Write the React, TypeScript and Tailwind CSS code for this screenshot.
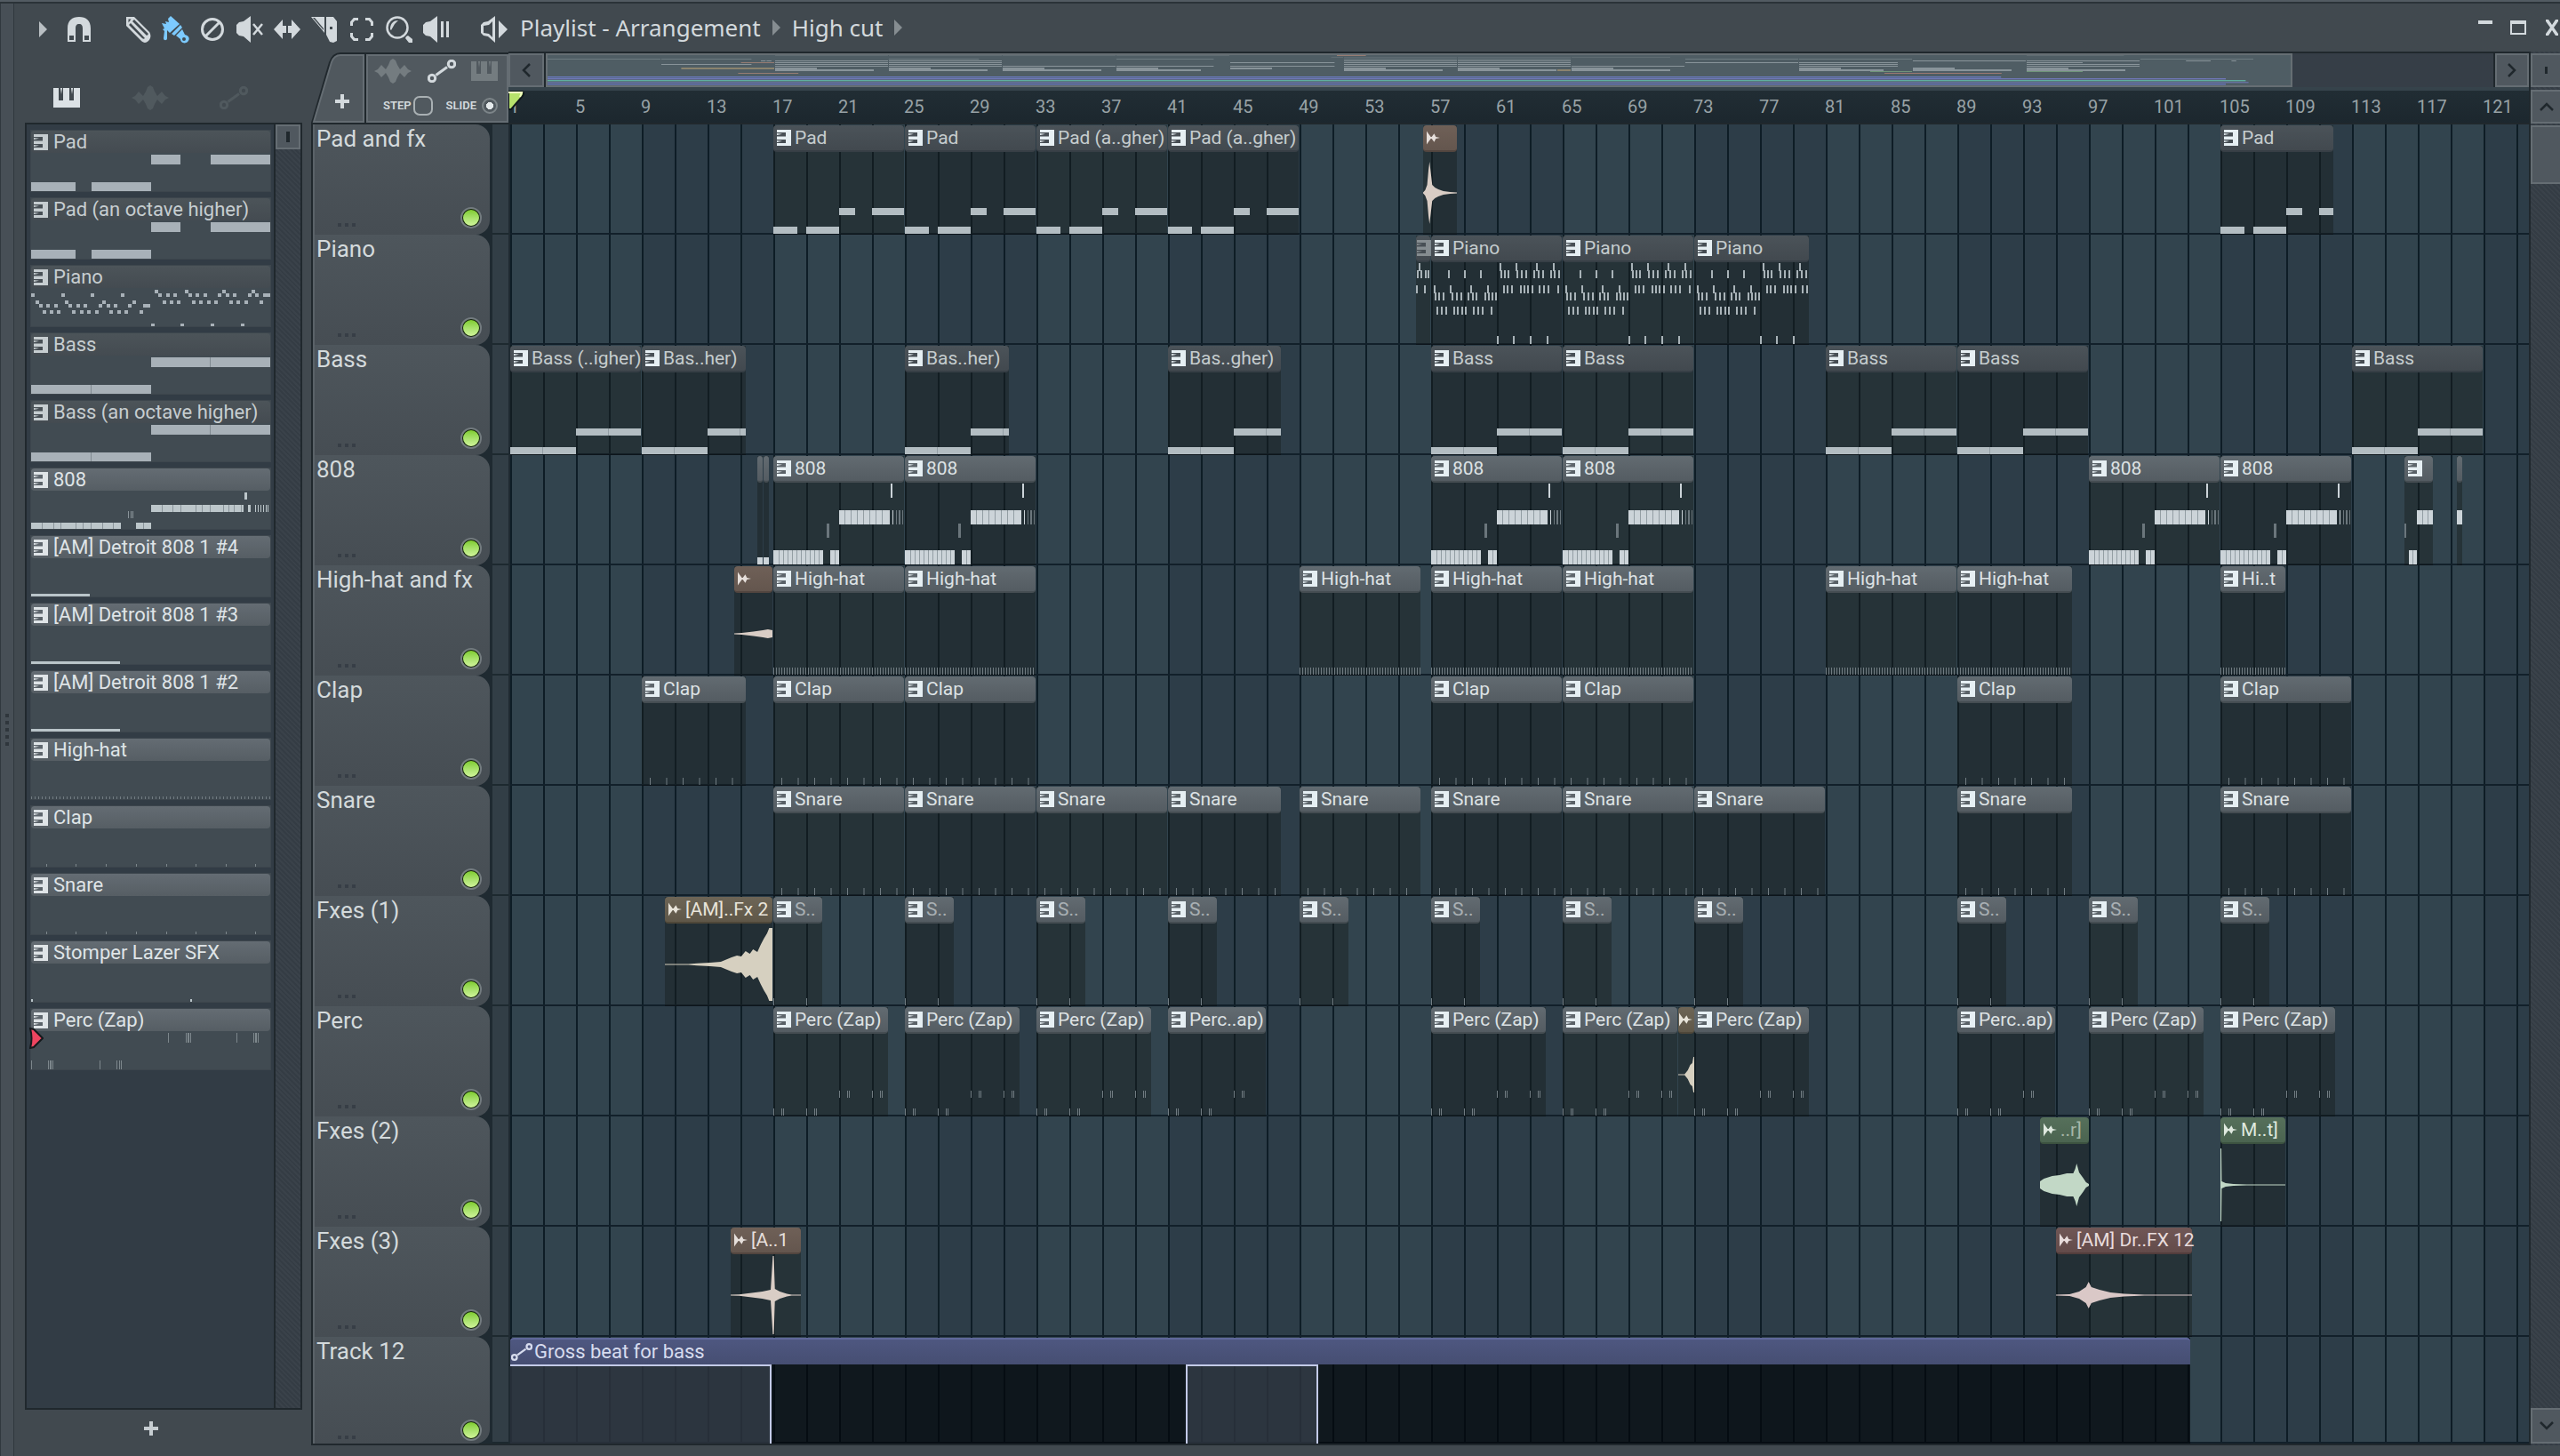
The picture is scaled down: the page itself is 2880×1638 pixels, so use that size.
import type { CSSProperties, ReactNode } from "react";

const BAR = 18.5; // px per bar on the grid
const MINI = 16; // px per bar in the overview

type Kind = "dark" | "light" | "brown" | "olive" | "red" | "green";
type Clip = { at: number; len: number; name?: string; kind: Kind; draw?: string; dim?: boolean };
type Track = { name: string; clips: Clip[] };

const HEAD: Record<Kind, string> = {
  dark: "from-[#4b5359] to-[#42494f] border-[#373f46] text-[#c5ccce]",
  light: "from-[#626b71] to-[#545c62] border-[#454d52] text-[#dde2e4]",
  brown: "from-[#6f6057] to-[#64564e] border-[#52453f] text-[#e6dfdb]",
  olive: "from-[#6d6556] to-[#5f5748] border-[#4f4739] text-[#e8e4da]",
  red: "from-[#705756] to-[#634b4a] border-[#523d3c] text-[#e8dcdc]",
  green: "from-[#56705b] to-[#4b6450] border-[#3c5240] text-[#dfe9df]",
};

const MINI_FILL: Record<Kind, string> = {
  dark: "#6d7a80",
  light: "#89949a",
  brown: "#967c73",
  olive: "#8b836e",
  red: "#9a7771",
  green: "#6f9479",
};

const WAVE_FILL: Record<Kind, string> = {
  dark: "#fff",
  light: "#fff",
  brown: "#d9cdc5",
  olive: "#d6d0c0",
  red: "#dac8c7",
  green: "#c2d8c6",
};

function many(starts: number[], len: number, name: string, kind: Kind, draw: string, dim = false): Clip[] {
  return starts.map((at) => ({ at, len, name, kind, draw, dim }));
}

const TRACKS: Track[] = [
  {
    name: "Pad and fx",
    clips: [
      ...many([17, 25], 8, "Pad", "dark", "pad"),
      ...many([33, 41], 8, "Pad (a..gher)", "dark", "pad"),
      { at: 56.5, len: 2.1, kind: "brown", draw: "hit" },
      { at: 105, len: 6.9, name: "Pad", kind: "dark", draw: "pad" },
    ],
  },
  {
    name: "Piano",
    clips: [
      { at: 56.1, len: 0.9, kind: "dark", draw: "pianoIn", name: "", dim: true },
      ...many([57, 65], 8, "Piano", "dark", "piano"),
      { at: 73, len: 7, name: "Piano", kind: "dark", draw: "piano" },
    ],
  },
  {
    name: "Bass",
    clips: [
      { at: 1, len: 8, name: "Bass (..igher)", kind: "dark", draw: "bass" },
      ...many([9, 25], 6.4, "Bas..her)", "dark", "bass"),
      { at: 41, len: 6.9, name: "Bas..gher)", kind: "dark", draw: "bass" },
      ...many([57, 65, 81, 89, 113], 8, "Bass", "dark", "bass"),
    ],
  },
  {
    name: "808",
    clips: [
      ...many([16, 16.4], 0.4, "", "light", "stub"),
      ...many([17, 25, 57, 65, 97, 105], 8, "808", "light", "808"),
      { at: 116.2, len: 1.8, name: "", kind: "light", draw: "808end" },
      { at: 119.4, len: 0.4, name: "", kind: "light", draw: "808tail" },
    ],
  },
  {
    name: "High-hat and fx",
    clips: [
      { at: 14.6, len: 2.4, kind: "brown", draw: "rise" },
      ...many([17, 25, 57, 65, 81], 8, "High-hat", "light", "hat"),
      { at: 49, len: 7.4, name: "High-hat", kind: "light", draw: "hat" },
      { at: 89, len: 7, name: "High-hat", kind: "light", draw: "hat" },
      { at: 105, len: 4, name: "Hi..t", kind: "light", draw: "hat" },
    ],
  },
  {
    name: "Clap",
    clips: [
      { at: 9, len: 6.4, name: "Clap", kind: "light", draw: "beat" },
      ...many([17, 25, 57, 65, 105], 8, "Clap", "light", "beat"),
      { at: 89, len: 7, name: "Clap", kind: "light", draw: "beat" },
    ],
  },
  {
    name: "Snare",
    clips: [
      ...many([17, 25, 33, 57, 65, 73, 105], 8, "Snare", "light", "beat"),
      { at: 41, len: 6.9, name: "Snare", kind: "light", draw: "beat" },
      { at: 49, len: 7.4, name: "Snare", kind: "light", draw: "beat" },
      { at: 89, len: 7, name: "Snare", kind: "light", draw: "beat" },
    ],
  },
  {
    name: "Fxes (1)",
    clips: [
      { at: 10.4, len: 6.6, name: "[AM]..Fx 2", kind: "olive", draw: "swell" },
      ...many([17, 25, 33, 41, 49, 57, 65, 73, 89, 97, 105], 3, "S..", "light", "laser", true),
    ],
  },
  {
    name: "Perc",
    clips: [
      ...many([17, 25, 33, 57, 65, 73, 97, 105], 7, "Perc (Zap)", "light", "perc"),
      ...many([41, 89], 6, "Perc..ap)", "light", "perc"),
      { at: 72, len: 1, kind: "olive", draw: "blip" },
    ],
  },
  {
    name: "Fxes (2)",
    clips: [
      { at: 94, len: 3, name: "..r]", kind: "green", draw: "burst", dim: true },
      { at: 105, len: 4, name: "M..t]", kind: "green", draw: "spike" },
    ],
  },
  {
    name: "Fxes (3)",
    clips: [
      { at: 14.4, len: 4.3, name: "[A..1", kind: "brown", draw: "cross" },
      { at: 95, len: 8.3, name: "[AM] Dr..FX 12", kind: "red", draw: "decay" },
    ],
  },
];

// [position 0..1, amplitude px]
const WAVES: Record<string, number[][]> = {
  hit: [[0, 0.6], [0.06, 3], [0.12, 9], [0.16, 26], [0.19, 35], [0.23, 22], [0.27, 9], [0.35, 6], [0.45, 4], [0.6, 2], [0.8, 1], [1, 0.6]],
  rise: [[0, 0.5], [0.2, 1], [0.5, 2.5], [0.75, 4], [0.88, 5], [1, 4]],
  swell: [[0, 0.5], [0.22, 0.6], [0.3, 1.3], [0.42, 2], [0.52, 3], [0.58, 6], [0.62, 8], [0.67, 10], [0.71, 9], [0.75, 15], [0.79, 12], [0.82, 17], [0.86, 14], [0.89, 22], [0.92, 29], [0.95, 35], [0.97, 41], [1, 41]],
  blip: [[0, 0.6], [0.4, 0.6], [0.6, 5], [0.75, 11], [0.88, 13], [0.95, 20], [1, 20]],
  burst: [[0, 4], [0.08, 7], [0.25, 10], [0.4, 11], [0.55, 13], [0.68, 13], [0.72, 18], [0.75, 24], [0.8, 14], [0.88, 8], [0.94, 3], [1, 1]],
  spike: [[0, 41], [0.015, 41], [0.02, 4], [0.08, 2], [0.2, 1], [0.4, 0.5], [1, 0.5]],
  cross: [[0, 0.5], [0.12, 0.8], [0.3, 2.5], [0.45, 4], [0.57, 6], [0.6, 44], [0.615, 44], [0.63, 7], [0.7, 4], [0.8, 1.5], [0.87, 0.5], [1, 0.5]],
  decay: [[0, 0.5], [0.1, 1], [0.17, 4], [0.22, 9], [0.24, 15], [0.26, 9], [0.32, 6], [0.4, 3], [0.5, 1.5], [0.65, 0.6], [1, 0.5]],
};

// note rows, in px inside the clip body; xs holds [x, width]
type Notes = { y: number; h: number; xs: number[][]; fill?: string }[];

const thin = (xs: number[], w = 2) => xs.map((x) => [x, w]);
const every = (from: number, step: number, to: number, w: number) => {
  const out: number[][] = [];
  for (let x = from; x < to; x += step) out.push([x, w]);
  return out;
};

const SEAM = "#939ea4";

const NOTES: Record<string, Notes> = {
  pad: [
    { y: 63, h: 8, xs: [[74, 18], [111, 37]] },
    { y: 84, h: 8, xs: [[0, 27], [37, 37]] },
  ],
  bass: [
    { y: 63, h: 8, xs: [[74, 74]] },
    { y: 84, h: 8, xs: [[0, 74]] },
    { y: 63, h: 8, xs: [[110, 1]], fill: SEAM },
    { y: 84, h: 8, xs: [[36, 1]], fill: SEAM },
  ],
  piano: [
    { y: 1, h: 9, xs: thin([77, 95, 118, 137]) },
    { y: 9, h: 9, xs: thin([19, 37, 55, 78, 82, 86, 96, 101, 106, 115, 120, 125, 134, 138, 143, 147]) },
    { y: 26, h: 9, xs: thin([3, 21, 44, 63, 81, 85, 90, 100, 104, 108, 113, 121, 126, 131, 142]) },
    { y: 34, h: 9, xs: thin([4, 8, 13, 23, 28, 33, 41, 46, 50, 60, 64, 68, 72]) },
    { y: 50, h: 9, xs: thin([6, 11, 16, 25, 29, 34, 38, 47, 52, 57, 67]) },
    { y: 83, h: 9, xs: thin([74, 92, 111, 130]) },
  ],
  pianoIn: [
    { y: 1, h: 9, xs: thin([3]) },
    { y: 9, h: 9, xs: thin([1, 5, 10, 13]) },
    { y: 26, h: 9, xs: thin([0, 9]) },
  ],
  "808": [
    { y: 1, h: 16, xs: [[132, 2]] },
    { y: 31, h: 16, xs: [[74, 57], [134, 1]] },
    { y: 31, h: 16, xs: every(80, 7, 128, 1), fill: SEAM },
    { y: 31, h: 16, xs: [[138, 1], [141, 2], [145, 1]], fill: "#6b767c" },
    { y: 46, h: 16, xs: [[60, 3]], fill: "#6b767c" },
    { y: 76, h: 16, xs: [[0, 56], [64, 10]] },
    { y: 76, h: 16, xs: every(6, 5, 54, 1), fill: SEAM },
    { y: 76, h: 16, xs: [[69, 1]], fill: SEAM },
  ],
  "808end": [
    { y: 31, h: 16, xs: [[14, 20]] },
    { y: 31, h: 16, xs: [[20, 1], [26, 1]], fill: SEAM },
    { y: 46, h: 16, xs: [[0, 2]], fill: "#6b767c" },
    { y: 76, h: 16, xs: [[5, 9]] },
    { y: 76, h: 16, xs: [[9, 1]], fill: SEAM },
  ],
  "808tail": [{ y: 31, h: 16, xs: [[0, 7]] }],
  stub: [{ y: 84, h: 8, xs: [[0, 8]] }],
  hat: [{ y: 84, h: 8, xs: every(0, 3, 148, 1) }],
  beat: [{ y: 84, h: 8, xs: every(9, BAR, 148, 1) }],
  laser: [{ y: 84, h: 8, xs: thin([0, 37], 1) }],
  perc: [
    { y: 64, h: 8, xs: [[74, 1], [83, 1], [85, 1], [111, 1], [120, 1], [122, 1]] },
    { y: 84, h: 8, xs: [[0, 1], [9, 1], [11, 1], [37, 1], [46, 1], [48, 1]] },
  ],
};

const NOTE_FILL: Record<string, string> = {
  pad: "#b3bdc2",
  bass: "#b3bdc2",
  piano: "#a9b3b8",
  pianoIn: "#a9b3b8",
  "808": "#ccd4d9",
  "808end": "#ccd4d9",
  "808tail": "#ccd4d9",
  stub: "#ccd4d9",
};

type Pattern = { name: string; lit?: boolean; fill?: string; notes: Notes };

const padNotes: Notes = [
  { y: 2, h: 11, xs: [[135, 33], [202, 67]] },
  { y: 33, h: 11, xs: [[0, 50], [68, 67]] },
];
const bassNotes: Notes = [
  { y: 2, h: 11, xs: [[135, 134]] },
  { y: 33, h: 11, xs: [[0, 135]] },
  { y: 2, h: 11, xs: [[201, 1]], fill: "#808a91" },
  { y: 33, h: 11, xs: [[67, 1]], fill: "#808a91" },
];
const beatNotes: Notes = [{ y: 40, h: 4, xs: thin([17, 50, 84, 118, 152, 185, 219, 252], 1) }];

const PATTERNS: Pattern[] = [
  { name: "Pad", notes: padNotes },
  { name: "Pad (an octave higher)", notes: padNotes },
  {
    name: "Piano",
    notes: [
      { y: 2, h: 4, xs: thin([139, 173, 215, 248], 4) },
      { y: 6, h: 4, xs: thin([0, 34, 67, 101, 143, 152, 160, 177, 185, 194, 210, 219, 227, 244, 252, 261, 265], 4) },
      { y: 14, h: 4, xs: thin([5, 38, 80, 114, 148, 156, 164, 181, 189, 198, 206, 223, 231, 240, 257], 4) },
      { y: 18, h: 4, xs: thin([9, 17, 26, 42, 51, 59, 76, 85, 93, 109, 126, 130], 4) },
      { y: 25, h: 4, xs: thin([13, 21, 29, 46, 55, 63, 72, 88, 97, 105, 122], 4) },
      { y: 40, h: 4, xs: thin([135, 168, 202, 236], 4) },
    ],
  },
  { name: "Bass", notes: bassNotes },
  { name: "Bass (an octave higher)", notes: bassNotes },
  {
    name: "808",
    lit: true,
    fill: "#bcc6ca",
    notes: [
      { y: 2, h: 8, xs: [[240, 3]] },
      { y: 16, h: 8, xs: [[135, 104], [244, 3], [252, 1], [255, 1], [258, 1], [261, 1], [264, 1], [266, 1]] },
      { y: 16, h: 8, xs: thin([147, 159, 168, 185, 192, 201, 216, 222, 228, 236], 1), fill: "#8b959b" },
      { y: 23, h: 8, xs: thin([109, 112, 114], 1), fill: "#8b959b" },
      { y: 36, h: 8, xs: [[0, 101], [118, 17]] },
      { y: 36, h: 8, xs: thin([12, 25, 33, 50, 58, 67, 80, 92, 126], 1), fill: "#8b959b" },
    ],
  },
  { name: "[AM] Detroit 808 1 #4", lit: true, fill: "#b9c4c9", notes: [{ y: 40, h: 4, xs: [[0, 66]] }] },
  { name: "[AM] Detroit 808 1 #3", lit: true, fill: "#b9c4c9", notes: [{ y: 40, h: 4, xs: [[0, 100]] }] },
  { name: "[AM] Detroit 808 1 #2", lit: true, fill: "#b9c4c9", notes: [{ y: 40, h: 4, xs: [[0, 100]] }] },
  { name: "High-hat", lit: true, fill: "#717b81", notes: [{ y: 40, h: 4, xs: every(0, 4, 270, 1) }] },
  { name: "Clap", lit: true, fill: "#7d878c", notes: beatNotes },
  { name: "Snare", lit: true, fill: "#7d878c", notes: beatNotes },
  { name: "Stomper Lazer SFX", lit: true, fill: "#b9c4c9", notes: [{ y: 40, h: 4, xs: [[0, 2], [179, 2]] }] },
  {
    name: "Perc (Zap)",
    lit: true,
    fill: "#7d878c",
    notes: [
      { y: 2, h: 11, xs: [[154, 1], [174, 1], [176, 2], [179, 1], [231, 1], [250, 1], [252, 2], [255, 1]] },
      { y: 33, h: 11, xs: [[0, 1], [19, 1], [21, 2], [24, 1], [77, 1], [96, 1], [99, 1], [101, 1]] },
    ],
  },
];

function NoteRects({ notes, fill }: { notes: Notes; fill: string }) {
  return (
    <>
      {notes.map((row, i) => (
        <g key={i} fill={row.fill ?? fill}>
          {row.xs.map(([x, w]) => (
            <rect key={x} x={x} y={row.y} width={w} height={row.h} />
          ))}
        </g>
      ))}
    </>
  );
}

/* ---------- icons ---------- */

function Svg({ w = 30, h = 30, box, className, children }: { w?: number; h?: number; box?: string; className?: string; children: ReactNode }) {
  return (
    <svg width={w} height={h} viewBox={box ?? `0 0 ${w} ${h}`} className={className} fill="currentColor" aria-hidden="true">
      {children}
    </svg>
  );
}

const PatternIcon = ({ className = "" }: { className?: string }) => (
  <Svg w={16} h={18} className={`shrink-0 ${className}`}>
    <path d="M0 0h16v18H0v-3h10v-4H0V7.500h10V3H0zM0 4l6 .8L0 6zM0 12l6 .8L0 14z" />
  </Svg>
);

const AudioIcon = () => (
  <Svg w={15} h={16} box="0 0 16 16" className="shrink-0">
    <path d="M0 0l2 3 3 4h1l3-4 2 4 5 1-5 1-2 4-3-4H5l-3 4-2 3z" />
  </Svg>
);

const KeysIcon = () => (
  <Svg w={30} h={22}>
    <path d="M0 0h6v14h5V0h7v14h5V0h7v22H0zM8 0h2L9 7zM20 0h2l-1 7z" />
  </Svg>
);

const WaveIcon = () => (
  <Svg w={42} h={28}>
    <path d="M0 14l4-2 4-5 5 5 3-5 2-5 3-2 3 2 2 5 3 5 5-5 4 5 4 2-4 2-4 5-5-5-3 5-2 5-3 2-3-2-2-5-3-5-5 5-4-5z" />
  </Svg>
);

const AutoIcon = ({ w = 32, h = 26 }: { w?: number; h?: number }) => (
  <Svg w={w} h={h} box="0 0 32 26">
    <g fill="none" stroke="currentColor" strokeWidth="3">
      <circle cx="5" cy="21" r="3.700" />
      <circle cx="27" cy="5" r="3.700" />
      <path d="M9.500 17.500L22 8.500" />
    </g>
  </Svg>
);

const PlusIcon = () => (
  <Svg w={16} h={16}>
    <path d="M6 0h4v6h6v4h-6v6H6v-6H0V6h6z" />
  </Svg>
);

const CaretIcon = ({ className = "" }: { className?: string }) => (
  <Svg w={9} h={18} className={className}>
    <path d="M0 0l9 9-9 9z" />
  </Svg>
);

const TOOLS: { label: string; icon: ReactNode }[] = [
  {
    label: "Draw",
    icon: (
      <Svg>
        <path fillRule="evenodd" d="M2 1h9l17 17c2 3 2 7-1 10s-6 2-8 0L2 11zM4.500 3.500v4l3-4zM5 10l15 15c1 1 2 1 3 0L7 8zM9 6l16 16c2-1 2-2 1-3L11 4z" />
      </Svg>
    ),
  },
  {
    label: "Paint",
    icon: (
      <Svg w={32} h={32} className="text-[#7ccaff]">
        <path d="M1 9l5 1-1-3 4 1-1-4 3-3 10 9-11 10-3-3v9c0 3-4 3-4 0l1-8-2-2 2-1zM22 11l2 3-9 9-3-2zM17 23l7-7 3 6c5 1 6 5 3 8s-8 1-8-3zm9 2a2 2 0 100 4 2 2 0 000-4z" fillRule="evenodd" />
      </Svg>
    ),
  },
  {
    label: "Delete",
    icon: (
      <Svg>
        <g fill="none" stroke="currentColor" strokeWidth="3">
          <circle cx="15" cy="15" r="11.500" />
          <path d="M7 23L23 7" />
        </g>
      </Svg>
    ),
  },
  {
    label: "Mute",
    icon: (
      <Svg>
        <path d="M0 10l3-3 5-1 8-6v30l-8-7-5-1-3-3z" />
        <path d="M19 9l10 12M29 9L19 21" fill="none" stroke="currentColor" strokeWidth="2.500" />
      </Svg>
    ),
  },
  {
    label: "Slip",
    icon: (
      <Svg>
        <path d="M0 15L10 4v7h4v8h-4v7zM30 15L20 4v7h-4v8h4v7z" />
      </Svg>
    ),
  },
  {
    label: "Slice",
    icon: (
      <Svg w={32}>
        <path fillRule="evenodd" d="M1 1h15v18l-4-5zM3 2l12 14V14L5 2zM18 1h8l4 5v22l-4 2-4-1-4-8zM22 12v3h3v-3z" />
      </Svg>
    ),
  },
  {
    label: "Select",
    icon: (
      <Svg>
        <path d="M3.500 11V7l3-3.500H11M19 3.500h4.500l3 3.500v4M26.500 19v4l-3 3.500H19M11 26.500H6.500l-3-3.500v-4" fill="none" stroke="currentColor" strokeWidth="3" />
      </Svg>
    ),
  },
  {
    label: "Zoom",
    icon: (
      <Svg>
        <circle cx="13" cy="13" r="11.500" fill="none" stroke="currentColor" strokeWidth="2.500" />
        <path d="M5 15c0-7 4-10 9-10l-4 4-4 7zM23 23l2-1 5 4v4h-4l-4-5z" />
      </Svg>
    ),
  },
  {
    label: "Playback",
    icon: (
      <Svg>
        <path d="M0 10l3-3 5-1 8-6v30l-8-7-5-1-3-3zM20 6h3v18h-3zM26 6h3v18h-3z" />
      </Svg>
    ),
  },
];

/* ---------- header ---------- */

function Toolbar() {
  return (
    <header className="flex h-[54px] items-center text-[#d3d9dd]">
      <button aria-label="Menu" className="ml-7 mt-1 text-[#b9bfc3]">
        <CaretIcon />
      </button>
      <button aria-label="Snap" className="ml-[15px] mr-6 mt-1 flex w-[42px] justify-center">
        <Svg w={26} h={28}>
          <path fillRule="evenodd" d="M0 28V13C0 4 5 0 13 0s13 4 13 13v15h-9V13c0-3-1-5-4-5s-4 2-4 5v15zM2 21v5h5v-5zM19 21v5h5v-5z" />
        </Svg>
      </button>
      {TOOLS.map((t) => (
        <button key={t.label} aria-label={t.label} className="mt-1 flex w-[42px] justify-center">
          {t.icon}
        </button>
      ))}
      <button aria-label="Preview" className="ml-[23px] mt-1 flex w-[42px] justify-center">
        <Svg>
          <path fillRule="evenodd" d="M0 10l3-3 5-1 8-6v30l-8-7-5-1-3-3zM3 11v8l6 1 4 4V6L9 10zM20 5l10 10-10 10z" />
        </Svg>
      </button>
      <h1 className="ml-2 flex items-center gap-[13px] text-[26px] leading-[30px]">
        <span>Playlist - Arrangement</span>
        <CaretIcon className="text-[#868d91]" />
        <span>High cut</span>
        <CaretIcon className="text-[#868d91]" />
      </h1>
      <div className="ml-auto flex items-center gap-5">
        <button aria-label="Minimize" className="flex h-4 w-4 items-start">
          <span className="h-1 w-full bg-current" />
        </button>
        <button aria-label="Maximize" className="h-4 w-[18px] border-2 border-t-4 border-current" />
        <button aria-label="Close">
          <Svg w={18} h={18}>
            <path d="M2 0h3l4 6 4-6h3v2l-5 7 5 7v2h-3l-4-6-4 6H2v-2l5-7-5-7z" />
          </Svg>
        </button>
      </div>
    </header>
  );
}

/* ---------- pattern picker ---------- */

function PatternRow({ pattern }: { pattern: Pattern }) {
  const head = pattern.lit ? "from-[#646c73] to-[#565e64] text-[#dfe4e7]" : "from-[#4c5459] to-[#444b51] text-[#c6cdd0]";
  return (
    <li>
      <button className="block w-full border border-[#3d464d] bg-[#414b52] text-left">
        <span className={`flex h-[25px] items-center gap-[6px] rounded-sm bg-gradient-to-b pl-[3px] text-[22px] leading-6 whitespace-nowrap ${head}`}>
          <PatternIcon />
          {pattern.name}
        </span>
        <svg className="block h-[43px] w-full" aria-hidden="true">
          <NoteRects notes={pattern.notes} fill={pattern.fill ?? "#a8b1b8"} />
        </svg>
      </button>
    </li>
  );
}

const hatch = "bg-[repeating-linear-gradient(45deg,#343c44_0px,#343c44_2px,#3a424a_2px,#3a424a_4px)]";

function Picker() {
  return (
    <aside className="flex w-[334px] shrink-0 flex-col">
      <nav className="flex h-20 items-end pb-2 pl-[26px]">
        <button aria-label="Patterns" className="flex h-10 w-[66px] items-center justify-center text-[#dbe1e5]">
          <KeysIcon />
        </button>
        <button aria-label="Audio" className="ml-7 flex h-10 w-[66px] items-center justify-center text-[#50595e]">
          <WaveIcon />
        </button>
        <button aria-label="Automation" className="ml-7 flex h-10 w-[66px] items-center justify-center text-[#50595e]">
          <AutoIcon />
        </button>
      </nav>
      <div className="ml-3 mr-[10px] flex flex-1 border-2 border-[#20282d] bg-[#323c45]">
        <div className="relative flex-1 pl-1 pr-[3px] pt-[6px]">
          <ul className="flex flex-col gap-[6px]">
            {PATTERNS.map((p) => (
              <PatternRow key={p.name} pattern={p} />
            ))}
          </ul>
          <svg className="absolute left-[3px] top-[1016px]" width="16" height="24" aria-hidden="true">
            <path d="M1 1q3 11 0 22l4-1 10-10L5 2z" fill="#ee4560" stroke="#15191c" strokeWidth="2" />
          </svg>
        </div>
        <div className={`w-[30px] border-l-2 border-[#20282d] ${hatch}`}>
          <div className="flex h-7 items-center justify-center border-2 border-[#656d73] bg-[#50585f]">
            <span className="h-3 w-1 bg-[#20282d]" />
          </div>
        </div>
      </div>
      <button aria-label="Add pattern" className="flex h-[52px] items-center justify-center pr-[26px] pb-[10px] text-[#c6cdd1]">
        <PlusIcon />
      </button>
    </aside>
  );
}

/* ---------- playlist head ---------- */

function Corner() {
  return (
    <div className="relative flex h-20 w-[222px] shrink-0 text-[#d3d9dd]">
      <svg className="absolute inset-0" width="222" height="80" aria-hidden="true">
        <path d="M0 80L20 12Q24 1 33 1H222V80z" fill="#20282d" />
        <path d="M3 79L23 12Q26 4 33 4H59V79z" fill="#50585e" stroke="#656d73" strokeWidth="2" />
        <path d="M63 4H221V79H63z" fill="#51595f" stroke="#656d73" strokeWidth="2" />
      </svg>
      <button aria-label="Add track" className="relative flex w-[62px] items-end justify-center pb-4 pl-2">
        <PlusIcon />
      </button>
      <div className="relative flex flex-1 flex-col justify-between py-2">
        <div className="flex h-7 items-center justify-between pl-[9px] pr-3">
          <button aria-label="Audio clips" className="text-[#747c80]">
            <WaveIcon />
          </button>
          <button aria-label="Automation clips">
            <AutoIcon />
          </button>
          <button aria-label="Pattern clips" className="text-[#747c80]">
            <KeysIcon />
          </button>
        </div>
        <div className="flex h-[22px] items-center justify-between pl-[19px] pr-3 text-[13px] font-semibold leading-4 text-[#d3d9dd]">
          <label className="flex items-center gap-[2px]">
            STEP
            <input type="checkbox" className="h-[22px] w-[22px] appearance-none rounded-[7px] border-2 border-[#a9b0b3]" />
          </label>
          <label className="flex items-center gap-[6px]">
            SLIDE
            <input
              type="radio"
              name="slide"
              defaultChecked
              className="h-[18px] w-[18px] appearance-none rounded-full border-2 border-[#7d8589] bg-[radial-gradient(circle,#e4e9eb_0px,#e4e9eb_4px,transparent_4px)]"
            />
          </label>
        </div>
      </div>
    </div>
  );
}

const AUTOMATION = [
  { y: 24, end: 102.2, fill: "#6a7cc0" },
  { y: 26, end: 118, fill: "#6f78b8" },
  { y: 28, end: 119.4, fill: "#5fae9f" },
  { y: 30, end: 119.6, fill: "#66719f" },
  { y: 32, end: 118, fill: "#6574b4" },
];

const ARROW = "flex shrink-0 items-center justify-center border-2 border-[#656d73] bg-[#50585f] text-[#20282d]";

function Overview() {
  return (
    <div className="flex h-10 gap-[2px] bg-[#20282d] pt-[2px]">
      <button aria-label="Scroll left" className={`h-[38px] w-10 ${ARROW}`}>
        <Svg w={10} h={16}>
          <path d="M9 1L2 8l7 7" fill="none" stroke="currentColor" strokeWidth="2.500" />
        </Svg>
      </button>
      <div className="flex h-[38px] flex-1 bg-[#363e47]">
        <svg className="h-full w-[1965px] shrink border-2 border-[#666e73] bg-[#4f5d64]" aria-hidden="true">
          {TRACKS.map((t, row) =>
            t.clips.map((c) => (
              <rect
                key={`${row}-${c.at}`}
                x={(c.at - 1) * MINI}
                y={row * 2}
                width={c.len * MINI - 1}
                height={row === 7 || row === 8 ? 2 : 1}
                fill={c.kind === "dark" && row < 2 ? "#5f6c72" : MINI_FILL[c.kind]}
              />
            )),
          )}
          {AUTOMATION.map((a) => (
            <rect key={a.y} x={0} y={a.y} width={a.end * MINI} height={1.4} fill={a.fill} />
          ))}
        </svg>
      </div>
      <button aria-label="Scroll right" className={`h-[38px] w-[38px] ${ARROW}`}>
        <Svg w={10} h={16}>
          <path d="M1 1l7 7-7 7" fill="none" stroke="currentColor" strokeWidth="2.500" />
        </Svg>
      </button>
    </div>
  );
}

function Ruler() {
  const marks = Array.from({ length: 31 }, (_, i) => i * 4 + 1);
  return (
    <div className="relative flex h-10 overflow-hidden border-t-4 border-[#36434b] bg-gradient-to-b from-[#212d34] to-[#1c272e] text-[#98a2a6]">
      {marks.map((m) => (
        <span key={m} className="w-[74px] shrink-0 pl-px text-[20px] leading-9">
          {m}
        </span>
      ))}
      <svg className="absolute left-0 top-0" width="20" height="24" aria-hidden="true">
        <path d="M0 1h16q2 2 0 5L3 21H0z" fill="#b7e26c" stroke="#11181c" strokeWidth="2" />
        <path d="M0 2h15l-2 5" fill="none" stroke="#f3ffc4" strokeWidth="2" />
      </svg>
    </div>
  );
}

/* ---------- tracks ---------- */

function Wave({ shape, fill }: { shape: string; fill: string }) {
  const pts = WAVES[shape];
  const top = pts.map(([x, a]) => `${x * 100},${46 - a}`);
  const bottom = [...pts].reverse().map(([x, a]) => `${x * 100},${46 + a}`);
  return (
    <svg className="block h-full w-full" viewBox="0 0 100 92" preserveAspectRatio="none" aria-hidden="true">
      <polygon points={[...top, ...bottom].join(" ")} fill={fill} />
    </svg>
  );
}

function ClipBox({ clip }: { clip: Clip }) {
  const box: CSSProperties = { left: Math.round((clip.at - 1) * BAR), width: Math.round(clip.len * BAR) - 1 };
  const audio = clip.draw !== undefined && clip.draw in WAVES;
  const bare = clip.len < 0.8;
  return (
    <div className="absolute top-px bottom-[-1px] flex flex-col border-b-2 border-[#0d151b] bg-[#191e20]/45" style={box}>
      <div
        className={`flex h-[30px] shrink-0 items-center gap-1 rounded border-b-2 bg-gradient-to-b text-[21px] leading-[26px] whitespace-nowrap ${HEAD[clip.kind]} ${bare ? "" : clip.len <= 1 ? "pl-px" : "pl-1"}`}
      >
        {audio && <AudioIcon />}
        {!audio && !bare && <PatternIcon className={clip.dim && clip.len < 1 ? "opacity-50" : "text-[#e6eff3]"} />}
        {clip.name && <span className={clip.dim ? "opacity-60" : ""}>{clip.name}</span>}
      </div>
      <div className="h-[92px] shrink-0">
        {audio ? (
          <Wave shape={clip.draw!} fill={WAVE_FILL[clip.kind]} />
        ) : (
          <svg className="block h-full w-full" aria-hidden="true">
            <NoteRects notes={NOTES[clip.draw!]} fill={NOTE_FILL[clip.draw!] ?? "#717c82"} />
          </svg>
        )}
      </div>
    </div>
  );
}

const GRID =
  "bg-[repeating-linear-gradient(90deg,#0e1d26_0px,#0e1d26_2px,transparent_2px,transparent_37px),repeating-linear-gradient(90deg,#32444e_0px,#32444e_148px,#2d3d48_148px,#2d3d48_296px)]";

function TrackRow({ name, last, children }: { name: string; last?: boolean; children: ReactNode }) {
  return (
    <li className={`flex bg-[#1f2a31] ${last ? "h-[120px]" : "h-[124px]"}`}>
      <div className="flex w-[199px] shrink-0 flex-col justify-between rounded-r-2xl border-l-2 border-[#5a6268] bg-gradient-to-b from-[#4e565c] to-[#464d53] pl-[2px]">
        <span className="text-[26px] leading-8 whitespace-nowrap text-[#d4dadc]">{name}</span>
        <div className={`flex items-end justify-between pl-6 pr-[10px] ${last ? "pb-1" : "pb-2"}`}>
          <span className="flex gap-1 pb-px" aria-hidden="true">
            <i className="h-1 w-1 bg-[#373e46]" />
            <i className="h-1 w-1 bg-[#373e46]" />
            <i className="h-1 w-1 bg-[#373e46]" />
          </span>
          <input
            type="checkbox"
            defaultChecked
            aria-label={`${name} on`}
            className="h-[22px] w-[22px] appearance-none rounded-full border-2 border-[#14240c] bg-gradient-to-b from-[#7fcc2c] to-[#d0f59a] outline-2 -outline-offset-1 outline-[#737b7f]"
          />
        </div>
      </div>
      <div className="ml-[3px] w-[18px] shrink-0 border-b-2 border-[#1d292f] bg-[#323e46]" />
      <div className={`relative ml-[2px] flex-1 ${GRID}`}>
        <div className="absolute inset-x-0 bottom-0 h-[2px] bg-[#12202a]" />
        {children}
      </div>
    </li>
  );
}

function AutomationClip() {
  return (
    <div className="absolute top-px bottom-0 left-0 flex flex-col bg-[#02050a]/70" style={{ width: Math.round(102.2 * BAR) - 1 }}>
      <div className="flex h-[30px] shrink-0 items-center gap-[2px] rounded-t border-t-2 border-[#5f689a] bg-gradient-to-b from-[#4e5780] to-[#464e72] pl-px text-[22px] leading-[26px] text-[#d7dcee]">
        <AutoIcon w={24} h={20} />
        Gross beat for bass
      </div>
      <div className="flex flex-1">
        <div className="w-[294px] border-t-2 border-r-2 border-[#c3cae8] bg-[#515b6b]/45" />
        <div className="ml-[466px] w-[149px] border-2 border-b-0 border-[#c3cae8] bg-[#515b6b]/45" />
      </div>
    </div>
  );
}

function Tracks() {
  return (
    <ul className="overflow-hidden border-l-2 border-b-2 border-t-2 border-[#20282d]">
      {TRACKS.map((t) => (
        <TrackRow key={t.name} name={t.name}>
          {t.clips.map((c) => (
            <ClipBox key={c.at} clip={c} />
          ))}
        </TrackRow>
      ))}
      <TrackRow name="Track 12" last>
        <AutomationClip />
      </TrackRow>
    </ul>
  );
}

function ScrollColumn() {
  return (
    <div className={`ml-[2px] flex w-[33px] shrink-0 flex-col ${hatch}`}>
      <div className="mb-[3px] mt-[2px] flex h-[38px] items-center justify-center border-2 border-r-0 border-[#656d73] bg-[#50585f]">
        <span className="h-2 w-[3px] bg-[#20282d]" />
      </div>
      <button aria-label="Scroll up" className={`h-[38px] border-r-0 ${ARROW}`}>
        <Svg w={16} h={10}>
          <path d="M1 9l7-7 7 7" fill="none" stroke="currentColor" strokeWidth="2.500" />
        </Svg>
      </button>
      <div className="mt-[2px] h-[66px] border-2 border-r-0 border-[#656d73] bg-[#50585f]" />
      <button aria-label="Scroll down" className={`mt-auto mb-[2px] h-10 border-r-0 ${ARROW}`}>
        <Svg w={16} h={10}>
          <path d="M1 1l7 7 7-7" fill="none" stroke="currentColor" strokeWidth="2.500" />
        </Svg>
      </button>
    </div>
  );
}

export default function App() {
  return (
    <div className="flex min-h-screen flex-col overflow-hidden bg-[#41494f] font-['Noto_Sans',sans-serif]">
      <div className="h-1 border-b-2 border-[#2b3338] bg-[#525b62]" />
      <div className="flex flex-1 border-b border-[#2b3338]">
        <div className="flex w-4 shrink-0 flex-col items-center justify-center gap-1 border-r border-l border-[#30383e] bg-[#474f56]">
          {[0, 1, 2, 3, 4].map((i) => (
            <span key={i} className="h-1 w-1 bg-[#2f363c]" />
          ))}
        </div>
        <div className="min-w-0 flex-1">
          <Toolbar />
          <div className="flex font-[Roboto,sans-serif]">
            <Picker />
            <main className="mb-3 flex min-w-0 flex-1 bg-[#20282d]">
              <div className="min-w-0 flex-1">
                <div className="flex h-20 bg-[#41494f]">
                  <Corner />
                  <div className="min-w-0 flex-1">
                    <Overview />
                    <Ruler />
                  </div>
                </div>
                <Tracks />
              </div>
              <ScrollColumn />
            </main>
          </div>
        </div>
      </div>
    </div>
  );
}
